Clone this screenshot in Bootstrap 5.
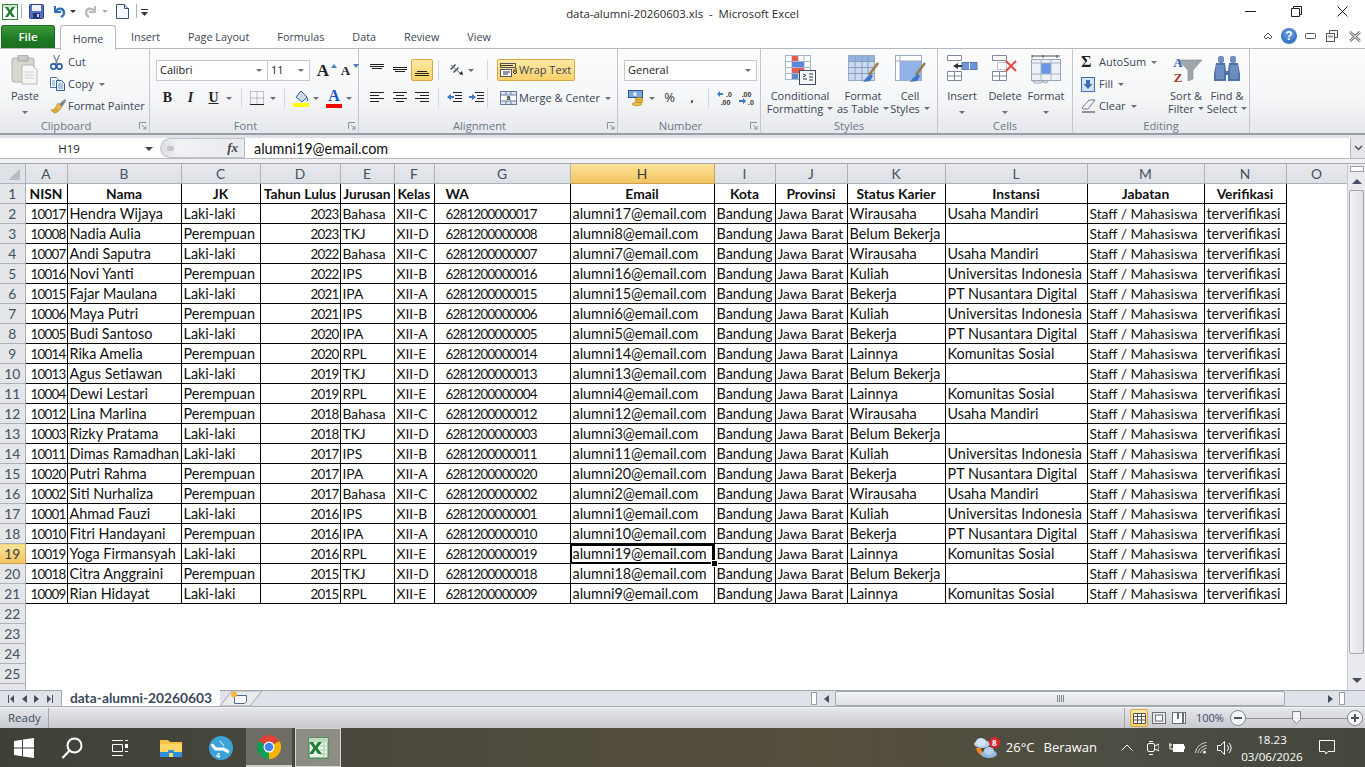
<!DOCTYPE html>
<html lang="en">
<head>
<meta charset="UTF-8">
<title>data-alumni-20260603.xls - Microsoft Excel</title>
<link href="https://cdn.jsdelivr.net/npm/bootstrap@5.3.0/dist/css/bootstrap.min.css" rel="stylesheet">
<style>
html, body { margin: 0; width: 1365px; height: 767px; overflow: hidden; background: #fff; }
body { font-family: "Open Sans", "Liberation Sans", sans-serif; font-size: 11px; color: #3b4656; display: flex; flex-direction: column; }
svg { display: block; flex: none; }
.dd { width: 0; height: 0; border: 3px solid transparent; border-top: 3px solid #6b6f76; border-bottom: 0; flex: none; }
.dd-gap { margin-left: 5px; }
.tl { display: flex; align-items: center; justify-content: center; flex: none; height: 22px; }
.sp { flex: none; }
.w1 { width: 1px; } .w2 { width: 2px; } .w3 { width: 3px; } .w4 { width: 4px; } .w5 { width: 5px; } .w6 { width: 6px; } .w7 { width: 7px; } .w8 { width: 8px; } .w9 { width: 9px; } .w12 { width: 12px; }
.w15 { width: 15px; } .w16 { width: 16px; } .w17 { width: 17px; } .w18 { width: 18px; } .w22 { width: 22px; } .w23 { width: 23px; } .w24 { width: 24px; }
.vsep { width: 1px; height: 20px; background: #d3d6db; flex: none; }

.titlebar { height: 24px; flex: none; background: #fff; position: relative; }
.qat { padding: 4px 0 0 2px; height: 24px; }
.qat-sep { width: 1px; height: 14px; background: #a9adb3; }
.qat-dd { margin-top: 6px; border-top-color: #333; }
.qat-dd-off { margin-top: 6px; border-top-color: #a9adb3; }
.app-title { font-size: 11.4px; color: #2a2a2a; padding-top: 5px; }
.winctl-btn { width: 46px; height: 22px; display: flex; align-items: center; justify-content: center; }
.tabstrip { height: 24px; flex: none; background: #fff; position: relative; padding-left: 1px; }
.tab-file { width: 54px; height: 23px; margin-top: 1px; background: linear-gradient(#3f9a3c, #1f7a25 55%, #1d6e22); color: #fff; border-radius: 3px 3px 0 0; font-weight: 600; font-size: 11.5px; display: flex; align-items: center; justify-content: center; border: 1px solid #1a6a20; border-bottom: 0; }
.tab-home { width: 56px; height: 25px; margin: 1px 0 -1px 5px; background: linear-gradient(#fff, #f8f9fa); border: 1px solid #b7bbc1; border-bottom: 0; border-radius: 3px 3px 0 0; display: flex; align-items: center; justify-content: center; position: relative; z-index: 2; }
.tab-txt { font-size: 10.8px; color: #3b4656; padding-top: 3px; }
.tab-ins { margin-left: 15px; } .tab-next { margin-left: 28px; }

.ribbon { height: 87px; flex: none; display: flex; background: linear-gradient(#fcfcfd, #f6f7f8 55%, #e5e8ec); border-top: 1px solid #b4b8be; border-bottom: 2px solid #9a9ea5; }
.rb-group { flex: none; display: flex; flex-direction: column; border-right: 1px solid #c2c6cd; position: relative; height: 100%; }
.rb-body { height: 69px; flex: none; }
.rb-label { text-align: center; color: #6c7785; font-size: 11.2px; line-height: 16px; }
.rb-lbl-ln { padding-right: 17px; }
.launch { right: 2px; bottom: 3px; }
.g-clip { width: 150px; } .g-font { width: 209px; } .g-align { width: 259px; } .g-num { width: 143px; } .g-style { width: 177px; } .g-cell { width: 135px; } .g-edit { width: 177px; }
.rows { padding: 10px 0 0 6px; display: flex; flex-direction: column; gap: 6px; }
.rows-row { display: flex; align-items: center; height: 22px; }
.combo { height: 21px; background: #fff; border: 1px solid #c6cad0; display: flex; align-items: center; justify-content: space-between; padding: 0 5px 0 3px; font-size: 11px; color: #222; flex: none; }
.cb-name { width: 112px; } .cb-size { width: 43px; margin-left: -1px; } .cb-num { width: 133px; }
.hl-btn { background: linear-gradient(#fde9a5, #fbd169); border: 1px solid #d8a843; border-radius: 2px; }
.wrap-btn { width: 78px; height: 22px; gap: 1px; padding-left: 2px; color: #3b4656; }
.merge-lbl { margin-right: 5px; white-space: nowrap; }
.stack { padding-top: 2px; }
.stack-row { height: 22px; display: flex; align-items: center; white-space: nowrap; color: #3b4656; }
.slot { width: 18px; flex: none; display: flex; justify-content: flex-start; }
.pastebtn { width: 40px; margin: 0 5px 0 5px; color: #9a9da3; }
.bigbtn { flex: none; display: flex; flex-direction: column; align-items: center; padding-top: 6px; line-height: 13px; color: #3b4656; white-space: nowrap; }
.big-ic { height: 30px; margin-bottom: 4px; }
.bw78 { width: 78px; } .bw48 { width: 48px; } .bw46 { width: 46px; } .bw38 { width: 38px; } .bw44 { width: 44px; }
.cap-dd { display: flex; align-items: center; gap: 4px; height: 13px; justify-content: center; }
.a-big { font-family: "Liberation Serif", serif; font-weight: 700; color: #222; line-height: 1; }
.fmt-b { font-size: 14px; } .fmt-i { font-style: italic; font-size: 14px; } .fmt-u { font-size: 14px; text-decoration: underline; }
.grow-a { font-size: 17px; } .shrink-a { font-size: 13px; }
.pct-sign { font-size: 13px; color: #333; }

.fbar { height: 29px; flex: none; background: linear-gradient(#dfe2e8 80%, #f0f1f4 80%); border-bottom: 1px solid #a5a9af; padding-top: 3px; display: flex; position: relative; }
.fbar-inner { height: 21px; display: flex; align-items: center; flex: 1; background: #fff; border-bottom: 1px solid #b6bac0; }
.namebox { width: 155px; display: flex; align-items: center; justify-content: center; position: relative; font-size: 11.5px; color: #222; height: 100%; padding-right: 17px; padding-top: 1px; }
.namebox .dd { position: absolute; right: 2px; top: 9px; border-top-color: #444; border-width: 4px 4px 0; }
.fx-round { width: 84px; height: 100%; margin-left: 5px; background: linear-gradient(90deg, #d9dce1, #f1f2f4 20%, #e8eaee); border-radius: 10px 0 0 10px; border: 1px solid #c0c4ca; border-right: 0; display: flex; align-items: center; justify-content: space-between; padding: 0 6px; font-family: "Liberation Serif", serif; font-style: italic; font-weight: 700; font-size: 13px; color: #444; }
.fx-input { flex: 1; padding-left: 9px; padding-top: 2px; border-left: 1px solid #b6bac0; height: 100%; display: flex; align-items: center; font-family: Lato, sans-serif; font-size: 14.4px; color: #111; background: #fff; }
.fx-exp { width: 15px; background: #e4e6ea; border-left: 1px solid #b6bac0; height: 100%; display: flex; align-items: center; justify-content: center; }

.sheet { height: 526px; flex: none; display: flex; overflow: hidden; }
.gridwrap { width: 1347px; overflow: hidden; flex: none; }
.xl { border-collapse: collapse; table-layout: fixed; width: 1347px; font-family: Lato, "Liberation Sans", sans-serif; font-size: 14.4px; color: #111; }
.xl td { height: 20px; padding: 0 2px; white-space: nowrap; overflow: hidden; line-height: 18px; }
.xl .data { border: 1px solid #000; padding-top: 1px; }
.xl .num { text-align: right; font-size: 13.4px; letter-spacing: -.75px; padding-right: 1px; }
.xl .tg { font-size: 13.8px; }
.xl .hd { text-align: center; font-weight: 700; font-size: 13.8px; }
.xl .wa { padding-left: 11px; font-size: 13.4px; letter-spacing: -.75px; }
.xl .hd.wa { font-size: 13.8px; letter-spacing: 0; text-align: left; }
.xl .colh, .xl .rowh { background: #e4e6ea; color: #44505f; text-align: center; border: 1px solid #aeb2b8; font-size: 13.8px; }
.xl .colh { border-top: 0; height: 19px; background: linear-gradient(#e7e9ed, #dcdfe4); }
.xl .rowh { border-left: 0; }
.xl .corner { height: 19px; background: #dfe2e7; border: 1px solid #aeb2b8; border-width: 0 1px 1px 0; padding: 0; }
.xl .act { background: linear-gradient(#fbe39a, #f3c35e); color: #3b3b3b; border-color: #c9a24d; }
.xl .sel { position: relative; overflow: visible; outline: 2px solid #000; outline-offset: -2px; }
.fillh { position: absolute; right: -4px; bottom: -4px; width: 7px; height: 7px; background: #000; border: 1px solid #fff; z-index: 3; }
.vscroll { width: 18px; flex: none; background: #e9ebef; border-left: 1px solid #c8cbd0; display: flex; flex-direction: column; align-items: center; }
.vs-split { width: 14px; height: 6px; margin-top: 2px; background: #fff; border: 1px solid #9a9ea5; flex: none; }
.vs-btn { height: 16px; width: 100%; display: flex; align-items: center; justify-content: center; flex: none; }
.vs-up { margin-top: 1px; } .vs-thumb { height: 464px; width: 15px; flex: none; background: linear-gradient(90deg, #f2f3f5, #dfe2e6); border: 1px solid #a2a6ad; border-radius: 2px; margin-top: 1px; }
.vs-gap { flex: 1; } .vs-down { height: 20px; }
.arr-up { width: 0; height: 0; border: 5px solid transparent; border-bottom: 5px solid #44505f; border-top: 0; }
.arr-dn { width: 0; height: 0; border: 5px solid transparent; border-top: 5px solid #44505f; border-bottom: 0; }
.arr-l { width: 0; height: 0; border: 4px solid transparent; border-right: 5px solid #44505f; border-left: 0; }
.arr-r { width: 0; height: 0; border: 4px solid transparent; border-left: 5px solid #44505f; border-right: 0; }

.tabsbar { height: 17px; flex: none; background: #dfe2e8; border-top: 1px solid #a5a9af; border-bottom: 1px solid #a5a9af; display: flex; align-items: stretch; }
.sh-nav { width: 62px; display: flex; align-items: center; justify-content: space-around; padding: 0 4px; border-right: 1px solid #a5a9af; flex: none; }
.sh-tab { width: 158px; flex: none; background: #fff; margin-top: -1px; text-align: center; font-family: Lato, sans-serif; font-weight: 700; font-size: 13.8px; color: #3d4a5c; line-height: 16px; }
.sh-new { width: 42px; flex: none; margin-top: -1px; }
.hs-space { width: 549px; flex: none; }
.hs-split { width: 6px; height: 13px; margin-top: 1px; background: #fff; border: 1px solid #9a9ea5; flex: none; }
.hs-btn { width: 18px; flex: none; display: flex; align-items: center; justify-content: center; }
.hs-thumb { width: 450px; flex: none; background: linear-gradient(#f3f4f6, #dde0e5); border: 1px solid #a2a6ad; border-radius: 2px; display: flex; align-items: center; justify-content: center; }
.hs-grip { width: 7px; height: 7px; background: repeating-linear-gradient(90deg, #7f848b 0 1px, transparent 1px 2px); }
.hs-rest { width: 54px; flex: none; display: flex; align-items: center; justify-content: flex-end; padding-right: 6px; }

.statusbar { height: 21px; flex: none; background: linear-gradient(#e4e6ea, #c7cacf); border-top: 1px solid #f4f5f6; display: flex; align-items: center; color: #3f4a58; padding-right: 2px; }
.st-ready { width: 49px; padding-left: 8px; border-right: 1px solid #a2a6ac; height: 100%; display: flex; align-items: center; font-size: 11.5px; }
.st-right { display: flex; align-items: center; height: 100%; }
.st-sep { width: 1px; height: 100%; background: #a2a6ac; margin-right: 5px; }
.vw-btn { width: 18px; height: 18px; display: flex; align-items: center; justify-content: center; margin-right: 2px; }
.zm-pct { width: 34px; margin-left: 6px; color: #4a3f6a; font-size: 11px; }
.zm-slide { width: 101px; height: 16px; position: relative; display: flex; align-items: center; }
.zm-line { width: 100%; height: 1px; background: #8f9399; }
.zm-thumb { position: absolute; left: 46px; top: 1px; }

.taskbar { height: 39px; flex: none; display: flex; align-items: center; background: linear-gradient(90deg, #3f4139, #4d4a3d 35%, #564f3c 60%, #4b4c43 85%, #45473f); color: #fff; }
.tb-ic { height: 39px; display: flex; align-items: center; justify-content: center; flex: none; }
.tb-start { width: 48px; } .tb-search { width: 48px; } .tb-tv { width: 48px; } .tb-app { width: 50px; }
.tb-folder { margin-left: 2px; }
.tb-chrome { width: 46px; background: rgba(255,255,255,.22); border-bottom: 2px solid #cfd0ca; }
.tb-excel { width: 46px; margin-left: 3px; background: rgba(255,255,255,.38); border: 1px solid #d6d6d0; }
.tray { margin-left: auto; display: flex; align-items: center; height: 39px; font-size: 13px; padding-right: 22px; }
.tb-badge { top: 1px; right: -2px; width: 11px; height: 11px; border-radius: 50%; background: #d8272d; font-size: 8px; line-height: 11px; text-align: center; color: #fff; font-weight: 700; }
.wx-temp { margin-left: 8px; } .wx-txt { margin-left: 9px; margin-right: 24px; }
.tr-ic { margin-right: 10px; }
.clock { width: 78px; text-align: center; line-height: 17px; font-size: 11.6px; }
.notif { width: 32px; display: flex; justify-content: center; }
</style>
</head>
<body>

<div class="titlebar d-flex justify-content-between">
  <div class="qat d-flex">
    <svg width="16" height="16" viewBox="0 0 16 16"><rect x=".5" y=".5" width="15" height="15" fill="#fff" stroke="#2d8a3c"/><rect x="1" y="1" width="14" height="3" fill="#cfe6d2"/><path d="M3 3h3l2 3 2-3h3l-3.500 5 3.500 5h-3l-2-3-2 3H3l3.500-5z" fill="#1e7b34"/></svg>
    <div class="sp w3"></div>
    <div class="qat-sep"></div>
    <div class="sp w7"></div>
    <svg width="15" height="15" viewBox="0 0 15 15"><rect x=".5" y=".5" width="14" height="14" rx="1" fill="#5570c4" stroke="#2d3f86"/><rect x="3" y="1" width="9" height="6" fill="#eef2fb"/><rect x="4" y="9" width="7" height="5" fill="#28356f"/><rect x="8" y="10" width="2" height="3" fill="#c8d2ee"/></svg>
    <div class="sp w8"></div>
    <svg width="15" height="15" viewBox="0 0 15 15"><path d="M3 2v6h6" fill="none" stroke="#2f6fb8" stroke-width="2"/><path d="M3 8c3-5 9-4 9 1 0 2-1 3-3 4" fill="none" stroke="#2f6fb8" stroke-width="2.300"/></svg>
    <div class="sp w3"></div>
    <div class="dd qat-dd"></div>
    <div class="sp w7"></div>
    <svg width="15" height="15" viewBox="0 0 15 15"><path d="M12 2v6H6" fill="none" stroke="#b7babf" stroke-width="2"/><path d="M12 8C9 3 3 4 3 9c0 2 1 3 3 4" fill="none" stroke="#b7babf" stroke-width="2.300"/></svg>
    <div class="sp w4"></div>
    <div class="dd qat-dd-off"></div>
    <div class="sp w8"></div>
    <svg width="13" height="15" viewBox="0 0 13 15"><path d="M.5.5h8l4 4v10H.5z" fill="#f7f9fc" stroke="#34507e"/><path d="M8.500.5v4h4" fill="#cdd9ea" stroke="#34507e"/></svg>
    <div class="sp w7"></div>
    <div class="qat-sep"></div>
    <div class="sp w4"></div>
    <svg width="7" height="15" viewBox="0 0 7 15"><rect y="5" width="7" height="1" fill="#333"/><path d="M0 8h7l-3.500 4z" fill="#333"/></svg>
  </div>
  <div class="app-title position-absolute top-0 start-0 w-100 text-center">data-alumni-20260603.xls&nbsp; -&nbsp; Microsoft Excel</div>
  <div class="d-flex">
    <div class="winctl-btn"><svg width="11" height="1" viewBox="0 0 11 1"><rect width="11" height="1" fill="#222"/></svg></div>
    <div class="winctl-btn"><svg width="11" height="11" viewBox="0 0 11 11"><path d="M2.500 2.500V.5h8v8h-2M.5 2.500h8v8h-8z" fill="none" stroke="#222"/></svg></div>
    <div class="winctl-btn"><svg width="11" height="11" viewBox="0 0 11 11"><path d="M.5.5l10 10M10.500.5l-10 10" fill="none" stroke="#222"/></svg></div>
  </div>
</div>

<div class="tabstrip d-flex align-items-start">
  <div class="tab-file">File</div>
  <div class="tab-home"><span class="tab-txt">Home</span></div>
  <div class="align-self-center tab-txt tab-ins">Insert</div>
  <div class="align-self-center tab-txt tab-next">Page Layout</div>
  <div class="align-self-center tab-txt tab-next">Formulas</div>
  <div class="align-self-center tab-txt tab-next">Data</div>
  <div class="align-self-center tab-txt tab-next">Review</div>
  <div class="align-self-center tab-txt tab-next">View</div>
  <div class="ms-auto d-flex align-items-center align-self-center pe-1">
    <svg width="10" height="8" viewBox="0 0 10 8" class="me-2"><path d="M1 5l4-4 4 4-2 2-2-2-2 2z" fill="#fff" stroke="#555"/></svg>
    <svg width="16" height="16" viewBox="0 0 16 16" class="me-2"><circle cx="8" cy="8" r="8" fill="#3c79c8"/><circle cx="8" cy="6" r="6" fill="#6da1e0" opacity=".5"/><text x="8" y="12" font-size="12" font-weight="700" text-anchor="middle" fill="#fff" font-family="Liberation Sans">?</text></svg>
    <svg width="11" height="6" viewBox="0 0 11 6" class="me-2"><rect x=".5" y=".5" width="10" height="5" rx="1" fill="#fff" stroke="#555"/></svg>
    <div class="sp w2"></div>
    <svg width="12" height="12" viewBox="0 0 12 12" class="me-2"><path d="M3.500 3.500v-3h8v7h-3" fill="#fff" stroke="#555"/><rect x=".5" y="3.500" width="8" height="8" fill="#fff" stroke="#555"/><rect x="2" y="5.500" width="5" height="2" fill="#999"/></svg>
    <div class="sp w3"></div>
    <svg width="12" height="11" viewBox="0 0 12 11"><path d="M1 1l10 9M11 1L1 10" stroke="#666" stroke-width="2.500"/><path d="M1 1l10 9M11 1L1 10" stroke="#fff" stroke-width="1"/></svg>
  </div>
</div>

<div class="ribbon">
  <div class="rb-group g-clip">
    <div class="rb-body d-flex">
      <div class="bigbtn pastebtn">
        <svg class="big-ic" width="28" height="30" viewBox="0 0 28 30"><rect x="1" y="3" width="22" height="24" rx="2" fill="#d9d5cf" stroke="#b4b0aa"/><rect x="7" y="0" width="10" height="6" rx="1" fill="#c9c9c9" stroke="#a5a5a5"/><path d="M11 10h10l5 5v14H11z" fill="#f5f5f5" stroke="#b9b9b9"/><path d="M14 17h9M14 20h9M14 23h9" stroke="#cfcfcf"/></svg>
        <span class="text-center">Paste</span>
        <div class="cap-dd mt-1"><div class="dd"></div></div>
      </div>
      <div class="stack">
        <div class="stack-row"><div class="slot"><svg width="13" height="15" viewBox="0 0 13 15"><path d="M3.500 0l4 9M9.500 0l-4 9" stroke="#7c8792" stroke-width="1.300"/><circle cx="3.500" cy="11.500" r="2.600" fill="none" stroke="#2a5caa" stroke-width="1.600"/><circle cx="9.500" cy="11.500" r="2.600" fill="none" stroke="#2a5caa" stroke-width="1.600"/></svg></div>Cut</div>
        <div class="stack-row"><div class="slot"><svg width="15" height="14" viewBox="0 0 15 14"><path d="M.5.500h6l2 2v8h-8z" fill="#fff" stroke="#4c6fa5"/><path d="M6.500 3.500h5l3 3v7h-8z" fill="#eaf1fb" stroke="#2a5caa"/><path d="M8 7h5M8 9h5M8 11h5M2 4h3M2 6h3M2 8h3" stroke="#6f90c0"/></svg></div>Copy<div class="dd dd-gap"></div></div>
        <div class="stack-row"><div class="slot"><svg width="16" height="15" viewBox="0 0 16 15"><path d="M9 5l3 3 4-6-1-2z" fill="#7a8794"/><path d="M1 11c4 0 5-4 7-7l4 4c-2 3-5 6-8 6z" fill="#e5c04c" stroke="#a67f22" stroke-width=".7"/><path d="M3 13l4-4M5 13.500l4-4" stroke="#a67f22" stroke-width=".7"/></svg></div>Format Painter</div>
      </div>
    </div>
    <div class="rb-label rb-lbl-ln">Clipboard</div>
    <svg class="launch position-absolute" width="8" height="8" viewBox="0 0 8 8"><path d="M.5 7V.5H7M3 3l4 4M4 7h3V4" fill="none" stroke="#8b9099"/></svg>
  </div>

  <div class="rb-group g-font">
    <div class="rb-body rows">
      <div class="rows-row">
        <div class="combo cb-name">Calibri<div class="dd"></div></div>
        <div class="combo cb-size">11<div class="dd"></div></div>
        <div class="tl w5"></div>
        <div class="tl w16 a-big grow-a">A</div><svg width="6" height="4" viewBox="0 0 6 4" class="mb-2"><path d="M0 4l3-4 3 4z" fill="#4a7fc0"/></svg>
        <div class="tl w1"></div>
        <div class="tl w15 a-big shrink-a">A</div><svg width="6" height="4" viewBox="0 0 6 4" class="mb-2"><path d="M0 0l3 4 3-4z" fill="#4a7fc0"/></svg>
      </div>
      <div class="rows-row">
        <div class="tl w23 a-big fmt-b">B</div>
        <div class="tl w23 a-big fmt-i">I</div>
        <div class="tl w23 a-big fmt-u">U</div>
        <div class="tl w8"><div class="dd"></div></div>
        <div class="tl w8"></div><div class="vsep"></div><div class="tl w6"></div>
        <div class="tl w18"><svg width="14" height="14" viewBox="0 0 14 14"><path d="M.5.5h13v13M.5.500v13M7 .5v13M.5 7h13" fill="none" stroke="#8b8f95" stroke-dasharray="1 1"/><rect y="13" width="14" height="1" fill="#222"/></svg></div>
        <div class="tl w3"></div><div class="tl w8"><div class="dd"></div></div>
        <div class="tl w7"></div><div class="vsep"></div><div class="tl w7"></div>
        <div class="tl w18"><svg width="16" height="17" viewBox="0 0 16 17"><path d="M3 7l5-6 6 6-5 5z" fill="#cdd9e8" stroke="#39618f"/><path d="M14 7c1.500 2 1.500 4 .5 4-1.200 0-1-2-.5-4z" fill="#2b6cb0"/><rect y="13" width="16" height="4" fill="#ffff00"/></svg></div>
        <div class="tl w2"></div><div class="tl w8"><div class="dd"></div></div>
        <div class="tl w5"></div>
        <div class="tl w18 flex-column"><span class="a-big fs-6 lh-1 text-primary-emphasis">A</span><svg width="16" height="4" viewBox="0 0 16 4"><rect width="16" height="4" fill="#f00"/></svg></div>
        <div class="tl w2"></div><div class="tl w8"><div class="dd"></div></div>
      </div>
    </div>
    <div class="rb-label rb-lbl-ln">Font</div>
    <svg class="launch position-absolute" width="8" height="8" viewBox="0 0 8 8"><path d="M.5 7V.5H7M3 3l4 4M4 7h3V4" fill="none" stroke="#8b9099"/></svg>
  </div>

  <div class="rb-group g-align">
    <div class="rb-body rows">
      <div class="rows-row">
        <div class="tl w1"></div>
        <div class="tl w22"><svg width="14" height="14" viewBox="0 0 14 14"><path d="M0 1.500h14M0 3.500h14M2 5.500h10" stroke="#222"/></svg></div>
        <div class="tl w23"><svg width="14" height="14" viewBox="0 0 14 14"><path d="M0 4.500h14M0 6.500h14M2 8.500h10" stroke="#222"/></svg></div>
        <div class="tl w22 hl-btn"><svg width="14" height="14" viewBox="0 0 14 14"><path d="M2 8.500h10M0 10.500h14M0 12.500h14" stroke="#222"/></svg></div>
        <div class="tl w5"></div><div class="vsep"></div><div class="tl w9"></div>
        <div class="tl w18"><svg width="16" height="14" viewBox="0 0 16 14"><path d="M1 6l5-5 1 1-5 5zM4 9l5-5 1 1-5 5z" fill="#444"/><path d="M2 2l10 9" stroke="#4a6a94"/><path d="M10 11l4 1-1-4z" fill="#222"/></svg></div>
        <div class="tl w1"></div><div class="tl w8"><div class="dd"></div></div>
        <div class="tl w12"></div><div class="vsep"></div><div class="tl w9"></div>
        <div class="tl wrap-btn hl-btn justify-content-start"><svg width="18" height="15" viewBox="0 0 18 15"><path d="M1 2.500h12M1 12.500h6" stroke="#333"/><rect x=".5" y=".5" width="15" height="4" fill="none" stroke="#555"/><rect x=".5" y="6.500" width="11" height="7" fill="#f7f8fa" stroke="#555"/><path d="M3 9h7M3 11h5" stroke="#333"/><path d="M14 6v3h-1l2 2 2-2h-1V5" fill="none" stroke="#222"/></svg><span>Wrap Text</span></div>
      </div>
      <div class="rows-row">
        <div class="tl w1"></div>
        <div class="tl w22"><svg width="14" height="12" viewBox="0 0 14 12"><path d="M0 .5h14M0 3.500h9M0 6.500h14M0 9.500h9" stroke="#222"/></svg></div>
        <div class="tl w23"><svg width="14" height="12" viewBox="0 0 14 12"><path d="M0 .5h14M3 3.500h8M0 6.500h14M3 9.500h8" stroke="#222"/></svg></div>
        <div class="tl w22"><svg width="14" height="12" viewBox="0 0 14 12"><path d="M0 .5h14M5 3.500h9M0 6.500h14M5 9.500h9" stroke="#222"/></svg></div>
        <div class="tl w5"></div><div class="vsep"></div><div class="tl w7"></div>
        <div class="tl w17"><svg width="15" height="12" viewBox="0 0 15 12"><path d="M6 .5h9M8 3.500h7M8 6.500h7M6 9.500h9" stroke="#222"/><path d="M0 5l4-3v2h3v2H4v2z" fill="#3a78c4"/></svg></div>
        <div class="tl w5"></div>
        <div class="tl w17"><svg width="15" height="12" viewBox="0 0 15 12"><path d="M6 .5h9M8 3.500h7M8 6.500h7M6 9.500h9" stroke="#222"/><path d="M7 5L3 2v2H0v2h3v2z" fill="#3a78c4"/></svg></div>
        <div class="tl w2"></div><div class="vsep"></div><div class="tl w9"></div>
        <div class="tl w22"><svg width="17" height="14" viewBox="0 0 17 14"><rect x=".5" y=".5" width="16" height="13" fill="#dce6f5" stroke="#66799a"/><rect x="1" y="4" width="15" height="6" fill="#fff"/><path d="M.5 4h16M.5 10h16M6 .5v3M11 .5v3M6 10v3M11 10v3" stroke="#66799a"/><text x="8.500" y="9" font-size="6.500" text-anchor="middle" fill="#222" font-family="Liberation Sans" font-weight="700">a</text></svg></div>
        <span class="merge-lbl">Merge &amp; Center</span><div class="dd"></div>
      </div>
    </div>
    <div class="rb-label rb-lbl-ln">Alignment</div>
    <svg class="launch position-absolute" width="8" height="8" viewBox="0 0 8 8"><path d="M.5 7V.5H7M3 3l4 4M4 7h3V4" fill="none" stroke="#8b9099"/></svg>
  </div>

  <div class="rb-group g-num">
    <div class="rb-body rows">
      <div class="rows-row"><div class="combo cb-num">General<div class="dd"></div></div></div>
      <div class="rows-row">
        <div class="tl w24"><svg width="17" height="16" viewBox="0 0 17 16"><rect x=".5" y=".5" width="14" height="7" fill="#7ea6dc" stroke="#2f5a96"/><circle cx="7" cy="4" r="2" fill="#dbe8f8"/><ellipse cx="11" cy="9" rx="4" ry="1.600" fill="#f0c040" stroke="#a47c1e" stroke-width=".6"/><ellipse cx="11" cy="11.500" rx="4" ry="1.600" fill="#f0c040" stroke="#a47c1e" stroke-width=".6"/><ellipse cx="9" cy="14" rx="5" ry="1.600" fill="#f0c040" stroke="#a47c1e" stroke-width=".6"/></svg></div>
        <div class="tl w8"><div class="dd"></div></div>
        <div class="tl w6"></div>
        <div class="tl w15 pct-sign">%</div>
        <div class="tl w7"></div>
        <div class="tl w16 fw-bold text-dark">,</div>
        <div class="tl w8"></div><div class="vsep"></div><div class="tl w7"></div>
        <div class="tl w18"><svg width="17" height="14" viewBox="0 0 17 14"><path d="M0 3l3-3v2h3v2H3v2z" fill="#3a78c4"/><text x="12" y="6" font-size="7" text-anchor="middle" font-family="Liberation Sans" font-weight="700" fill="#333">.0</text><text x="8.500" y="13.500" font-size="7" text-anchor="middle" font-family="Liberation Sans" font-weight="700" fill="#333">.00</text></svg></div>
        <div class="tl w3"></div>
        <div class="tl w18"><svg width="17" height="14" viewBox="0 0 17 14"><text x="8.500" y="6" font-size="7" text-anchor="middle" font-family="Liberation Sans" font-weight="700" fill="#333">.00</text><path d="M8 10L5 7v2H1v2h4v2z" fill="#3a78c4"/><text x="13" y="13.500" font-size="7" text-anchor="middle" font-family="Liberation Sans" font-weight="700" fill="#333">.0</text></svg></div>
      </div>
    </div>
    <div class="rb-label rb-lbl-ln">Number</div>
    <svg class="launch position-absolute" width="8" height="8" viewBox="0 0 8 8"><path d="M.5 7V.5H7M3 3l4 4M4 7h3V4" fill="none" stroke="#8b9099"/></svg>
  </div>

  <div class="rb-group g-style">
    <div class="rb-body d-flex">
      <div class="bigbtn bw78">
        <svg class="big-ic" width="31" height="30" viewBox="0 0 31 30"><rect x=".5" y=".5" width="25" height="24" fill="#fff" stroke="#a7b5c9"/><path d="M7 .5v24M13 .5v24M19 .5v24M.5 6.500h25M.5 12.500h25M.5 18.500h25" stroke="#a7b5c9"/><rect x="7" y="1" width="6" height="5" fill="#e85a4f"/><rect x="7" y="7" width="12" height="5" fill="#5b89d6"/><rect x="7" y="13" width="12" height="5" fill="#e85a4f"/><rect x="7" y="19" width="6" height="5" fill="#5b89d6"/><rect x="14.500" y="15.500" width="16" height="14" fill="#f5f7fb" stroke="#3d4a5e"/><path d="M18 19l3 1.500-3 1.500M18 24h4M24 19h4M24 22h4M24 25h4" fill="none" stroke="#333"/></svg>
        Conditional<div class="cap-dd">Formatting<div class="dd"></div></div>
      </div>
      <div class="bigbtn bw48">
        <svg class="big-ic" width="31" height="30" viewBox="0 0 31 30"><rect x=".5" y=".5" width="26" height="25" fill="#c9daf2" stroke="#9aabc3"/><rect x="1" y="1" width="25" height="5" fill="#93b3e2"/><path d="M7 .5v25M14 .5v25M20 .5v25M.5 6.500h26M.5 12.500h26M.5 18.500h26" stroke="#8b9cb5"/><path d="M30 8l-9 12" stroke="#9b7a4a" stroke-width="2.500"/><path d="M23 19l-5 4-3 4 7-1 3-5z" fill="#3f74c2"/></svg>
        Format<div class="cap-dd">as Table<div class="dd"></div></div>
      </div>
      <div class="bigbtn bw46">
        <svg class="big-ic" width="31" height="30" viewBox="0 0 31 30"><rect x=".5" y=".5" width="26" height="25" fill="#fff" stroke="#9aabc3"/><rect x="5" y="6" width="21" height="19" fill="#93b3e8"/><path d="M5 .5v25M.5 6h26" stroke="#9aabc3"/><path d="M30 8l-9 12" stroke="#9b7a4a" stroke-width="2.500"/><path d="M23 19l-5 4-3 4 7-1 3-5z" fill="#3f74c2"/></svg>
        Cell<div class="cap-dd">Styles<div class="dd"></div></div>
      </div>
    </div>
    <div class="rb-label">Styles</div>
  </div>

  <div class="rb-group g-cell">
    <div class="rb-body d-flex">
      <div class="bigbtn bw48">
        <svg class="big-ic" width="31" height="30" viewBox="0 0 31 30"><path d="M.5.500h14v5h-14zM.5 16.500h14v9H.5zM7.500 16.500v9M.5 21h14" fill="#fff" stroke="#7f8b9c"/><rect x="15" y="7.500" width="15" height="7" fill="#6d96d8" stroke="#5a7bb0"/><path d="M22.500 7.500v7" stroke="#fff"/><path d="M6 11l5-3v2h4v2h-4v2z" fill="#333"/></svg>
        Insert<div class="cap-dd mt-1"><div class="dd"></div></div>
      </div>
      <div class="bigbtn bw38">
        <svg class="big-ic" width="26" height="30" viewBox="0 0 26 30"><path d="M.5.500h14v5h-14zM.5 16.500h14v9H.5zM7.500 16.500v9M.5 21h14" fill="#fff" stroke="#7f8b9c"/><rect x="5.500" y="7.500" width="9" height="7" fill="#fff" stroke="#7f8b9c" stroke-dasharray="1 1"/><path d="M14 6l10 10M24 6L14 16" stroke="#e8483c" stroke-width="2"/></svg>
        Delete<div class="cap-dd mt-1"><div class="dd"></div></div>
      </div>
      <div class="bigbtn bw44">
        <svg class="big-ic" width="31" height="30" viewBox="0 0 31 30"><path d="M1 1h28M1 0v3M12 0v3M26 0v3" stroke="#4a4f57"/><rect x=".5" y="4.500" width="29" height="21" fill="#eef2f8" stroke="#9aa6b6"/><rect x="10" y="8" width="10" height="11" fill="#6d96e2"/><path d="M10 4.500v21M20 4.500v21M.5 8h29M.5 19h29" stroke="#a7b2c2"/><path d="M2 26h10a2 2 0 0 1-2 2H4a2 2 0 0 1-2-2zM12 26h5a2 2 0 0 1-2 2h-1z" fill="#fff" stroke="#9aa6b6"/></svg>
        Format<div class="cap-dd mt-1"><div class="dd"></div></div>
      </div>
    </div>
    <div class="rb-label">Cells</div>
  </div>

  <div class="rb-group g-edit">
    <div class="rb-body d-flex">
      <div class="stack ms-2 bw78 me-2">
        <div class="stack-row"><div class="slot"><span class="a-big fs-6 lh-1 text-dark">Σ</span></div>AutoSum<div class="dd dd-gap"></div></div>
        <div class="stack-row"><div class="slot"><svg width="14" height="15" viewBox="0 0 14 15"><rect x=".5" y=".5" width="13" height="14" fill="#d6e3f6" stroke="#3f6cb3"/><path d="M5 3h4v4h2.500L7 12 2.500 7H5z" fill="#3f6cb3"/></svg></div>Fill<div class="dd dd-gap"></div></div>
        <div class="stack-row"><div class="slot"><svg width="15" height="14" viewBox="0 0 15 14"><path d="M1 9l7-8h6L7 10H2z" fill="#f1f3f6" stroke="#737a85"/><path d="M1 13h13" stroke="#333"/></svg></div>Clear<div class="dd dd-gap"></div></div>
      </div>
      <div class="bigbtn bw38">
        <svg class="big-ic" width="31" height="30" viewBox="0 0 31 30"><path d="M7 5h24l-9 10v9l-5 2V15z" fill="#a1a6ad" stroke="#7f858e" stroke-width=".6"/><text x="7" y="12" font-family="Liberation Serif" font-weight="700" font-size="13" text-anchor="middle" fill="#2f5fa8">A</text><text x="7" y="27" font-family="Liberation Serif" font-weight="700" font-size="13" text-anchor="middle" fill="#a33a2f">Z</text></svg>
        Sort &amp;<div class="cap-dd">Filter<div class="dd"></div></div>
      </div>
      <div class="bigbtn bw44">
        <svg class="big-ic" width="28" height="30" viewBox="0 0 28 30"><rect x="5" y="1" width="6" height="7" rx="2" fill="#6f8fbd"/><rect x="17" y="1" width="6" height="7" rx="2" fill="#6f8fbd"/><path d="M3 8h9l1 8h2l1-8h9l2 11v7H15v-6h-2v6H1v-7z" fill="#4f72a8"/><path d="M3 10h8v14H3zM17 10h8v14h-8z" fill="#7fa0cf" opacity=".6"/></svg>
        Find &amp;<div class="cap-dd">Select<div class="dd"></div></div>
      </div>
    </div>
    <div class="rb-label">Editing</div>
  </div>
</div>

<div class="fbar">
  <div class="fbar-inner">
    <div class="namebox">H19<div class="dd"></div></div>
    <div class="fx-round"><svg width="7" height="5" viewBox="0 0 7 5"><rect width="7" height="5" rx="2" fill="#c3c6cb"/></svg><i>fx</i></div>
    <div class="fx-input">alumni19@email.com</div>
    <div class="fx-exp"><svg width="9" height="6" viewBox="0 0 9 6"><path d="M1 1l3.500 3.500L8 1" fill="none" stroke="#555" stroke-width="1.500"/></svg></div>
  </div>
</div>

<div class="sheet">
  <div class="gridwrap"><table class="xl" id="grid"></table></div>
  <div class="vscroll">
    <div class="vs-split"></div>
    <div class="vs-btn vs-up"><div class="arr-up"></div></div>
    <div class="vs-thumb"></div>
    <div class="vs-gap"></div>
    <div class="vs-btn vs-down"><div class="arr-dn"></div></div>
  </div>
</div>

<div class="tabsbar">
  <div class="sh-nav">
    <svg width="6" height="8" viewBox="0 0 6 8"><path d="M0 0h1v8H0zM6 0v8L2 4z" fill="#44505f"/></svg>
    <div class="arr-l"></div><div class="arr-r"></div>
    <svg width="6" height="8" viewBox="0 0 6 8"><path d="M6 0H5v8h1zM0 0v8l4-4z" fill="#44505f"/></svg>
  </div>
  <div class="sh-tab">data-alumni-20260603</div>
  <div class="sh-new"><svg width="42" height="16" viewBox="0 0 42 16"><path d="M0 16L12 1h30L30 16z" fill="#e9ebef" stroke="#a5a9af"/><path d="M14.500 5.500h12v6l-2 2h-10z" fill="#fff" stroke="#4a6a94"/><circle cx="14" cy="4.500" r="3" fill="#f6b73c"/></svg></div>
  <div class="hs-space"></div>
  <div class="hs-split"></div>
  <div class="hs-btn"><div class="arr-l"></div></div>
  <div class="hs-thumb"><div class="hs-grip"></div></div>
  <div class="hs-rest"><div class="arr-r"></div></div>
  <div class="hs-split"></div>
</div>

<div class="statusbar justify-content-between">
  <div class="st-ready">Ready</div>
  <div class="st-right">
    <div class="st-sep"></div>
    <div class="vw-btn hl-btn"><svg width="13" height="11" viewBox="0 0 13 11"><path d="M.5.500h12v10H.5zM4.500.5v10M8.500.5v10M.5 3.500h12M.5 7h12" fill="#fff" stroke="#555"/></svg></div>
    <div class="vw-btn"><svg width="14" height="12" viewBox="0 0 14 12"><rect x=".5" y=".5" width="13" height="11" fill="#e8eaed" stroke="#6a6f76"/><rect x="3.500" y="3" width="7" height="6" fill="#fff" stroke="#6a6f76"/></svg></div>
    <div class="vw-btn"><svg width="14" height="12" viewBox="0 0 14 12"><rect x=".5" y=".5" width="13" height="11" fill="#fff" stroke="#6a6f76"/><path d="M5 0h2v7H5zM10 0h2v11h-2z" fill="#6a6f76"/></svg></div>
    <div class="zm-pct">100%</div>
    <svg width="16" height="16" viewBox="0 0 16 16"><circle cx="8" cy="8" r="7.500" fill="#f5f6f7" stroke="#7f848b"/><rect x="4" y="7" width="8" height="2" fill="#4f5560"/></svg>
    <div class="zm-slide"><div class="zm-line"></div><svg class="zm-thumb" width="9" height="13" viewBox="0 0 9 13"><path d="M.5.500h8v8l-4 4-4-4z" fill="#f2f3f5" stroke="#7f848b"/></svg></div>
    <svg width="16" height="16" viewBox="0 0 16 16"><circle cx="8" cy="8" r="7.500" fill="#f5f6f7" stroke="#7f848b"/><path d="M4 7h3V4h2v3h3v2H9v3H7V9H4z" fill="#4f5560"/></svg>
  </div>
</div>

<div class="taskbar">
  <div class="tb-ic tb-start"><svg width="20" height="20" viewBox="0 0 20 20"><path d="M0 3l8-1.200V9.500H0zM9 1.600L20 0v9.500H9zM0 10.500h8v7.700L0 17zM9 10.500h11V20L9 18.400z" fill="#fff"/></svg></div>
  <div class="tb-ic tb-search"><svg width="22" height="22" viewBox="0 0 22 22"><circle cx="13.500" cy="8.500" r="7" fill="none" stroke="#fff" stroke-width="2"/><path d="M8.500 13.500L1.500 21" stroke="#fff" stroke-width="2.200"/></svg></div>
  <div class="tb-ic tb-tv"><svg width="16" height="16" viewBox="0 0 16 16"><path d="M0 .5h11M0 15.500h11M.5 4.500h10v7H.5z" fill="none" stroke="#fff"/><rect x="13" y="0" width="3" height="1" fill="#fff"/><rect x="13" y="4" width="3" height="4" fill="#fff"/><rect x="13" y="11" width="3" height="1" fill="#fff"/></svg></div>
  <div class="tb-ic tb-app tb-folder"><svg width="22" height="19" viewBox="0 0 22 19"><path d="M0 2h8l2 2h12v15H0z" fill="#f5c242"/><rect y="6" width="22" height="13" fill="#ffd768"/><path d="M0 14h8v-2h6v2h8v5H0z" fill="#2f8fd8"/><rect x="9" y="15" width="4" height="4" fill="#ffd768"/></svg></div>
  <div class="tb-ic tb-app"><svg width="24" height="24" viewBox="0 0 24 24"><circle cx="12" cy="12" r="12" fill="#3ea4d8"/><path d="M4 8l3 4h8l5 3-1 2-5-3H6L2 9zM11 5l4 5" fill="#fff" stroke="#fff"/><text x="9" y="22" font-size="7" fill="#fff" text-anchor="middle" font-family="Liberation Sans" font-weight="700">4</text></svg></div>
  <div class="tb-ic tb-chrome"><svg width="24" height="24" viewBox="0 0 24 24"><path d="M12 12L1.600 6a12 12 0 0 1 20.800 0z" fill="#db4437"/><path d="M12 12L1.600 6A12 12 0 0 0 12 24z" fill="#0f9d58"/><path d="M12 12l10.400-6A12 12 0 0 1 12 24z" fill="#f4b400"/><circle cx="12" cy="12" r="5.500" fill="#fff"/><circle cx="12" cy="12" r="4.300" fill="#4285f4"/></svg></div>
  <div class="tb-ic tb-excel"><svg width="24" height="24" viewBox="0 0 24 24"><rect x="3" y="2" width="19" height="20" fill="#eaf3ea" stroke="#2f8a44"/><rect x="3" y="2" width="19" height="4" fill="#bcdcc0"/><path d="M14 10h8M14 14h8M14 18h8M18 6v16" stroke="#a6c9ab"/><path d="M3 6h4l2.500 4L12 6h4l-4.500 6 4.500 6h-4l-2.500-4L7 18H3l4.500-6z" fill="#1e7b34"/></svg></div>
  <div class="tray">
    <div class="position-relative"><svg width="25" height="24" viewBox="0 0 25 24"><ellipse cx="9" cy="8" rx="8" ry="4" fill="#b7d0ea"/><ellipse cx="8" cy="6" rx="5" ry="4" fill="#d5e4f3"/><path d="M3 12c1 6 7 10 13 8-4 0-8-3-8-8z" fill="#ee8a1d"/><ellipse cx="16" cy="18" rx="8" ry="4" fill="#8fb8e4"/><ellipse cx="16" cy="15" rx="5" ry="4" fill="#b7d0ea"/></svg><div class="tb-badge position-absolute">8</div></div>
    <span class="wx-temp">26°C</span><span class="wx-txt">Berawan</span>
    <svg class="tr-ic" width="12" height="7" viewBox="0 0 12 7"><path d="M.5 6.500L6 1l5.500 5.500" fill="none" stroke="#fff"/></svg>
    <div class="sp w4"></div>
    <svg class="tr-ic" width="12" height="16" viewBox="0 0 12 16"><rect x=".5" y="3.500" width="7" height="8" rx="1.500" fill="none" stroke="#fff"/><path d="M8 6l4-2v7L8 9M2 1.500h4M2 14.500h4" fill="none" stroke="#fff"/></svg>
    <svg class="tr-ic" width="16" height="11" viewBox="0 0 16 11"><rect x="4.500" y="2.500" width="10" height="7" fill="#fff" stroke="#fff"/><path d="M0 3h3M1 1v3M1 4v3h3" fill="none" stroke="#fff"/><rect x="14" y="4" width="2" height="3" fill="#fff"/></svg>
    <svg class="tr-ic" width="12" height="12" viewBox="0 0 12 12"><path d="M.5 11C1 5 6 1 11.500.5M3 11c.5-4 4-7 8.500-7.500M5.500 11c.3-2 3-4.500 6-5" fill="none" stroke="#d8d8d2"/><circle cx="9.500" cy="10" r="1.500" fill="#fff"/></svg>
    <svg width="16" height="14" viewBox="0 0 16 14"><path d="M.5 4.500h3L7.500.5v13l-4-4h-3z" fill="none" stroke="#fff"/><path d="M10 4a4 4 0 0 1 0 6M12 2a7 7 0 0 1 0 10" fill="none" stroke="#fff"/></svg>
    <div class="clock">18.23<br>03/06/2026</div>
    <div class="notif"><svg width="16" height="15" viewBox="0 0 16 15"><path d="M.5.500h15v11H9l-2 2.500-1-2.500H.5z" fill="none" stroke="#fff"/></svg></div>
  </div>
</div>

<script>
const widths = [25,42,114,79,80,54,40,136,144,61,72,98,142,117,82,61];
const letters = ['A','B','C','D','E','F','G','H','I','J','K','L','M','N','O'];
const heads = ['NISN','Nama','JK','Tahun Lulus','Jurusan','Kelas','WA','Email','Kota','Provinsi','Status Karier','Instansi','Jabatan','Verifikasi'];
const jurusan = {
    Bahasa: ['XII-C','Wirausaha','Usaha Mandiri'],
    TKJ: ['XII-D','Belum Bekerja',''],
    IPS: ['XII-B','Kuliah','Universitas Indonesia'],
    IPA: ['XII-A','Bekerja','PT Nusantara Digital'],
    RPL: ['XII-E','Lainnya','Komunitas Sosial']
};
const L = 'Laki-laki', P = 'Perempuan';
// nomor urut, nama, jk, tahun, jurusan
const alumni = [
    [17,'Hendra Wijaya',L,2023,'Bahasa'],[8,'Nadia Aulia',P,2023,'TKJ'],[7,'Andi Saputra',L,2022,'Bahasa'],
    [16,'Novi Yanti',P,2022,'IPS'],[15,'Fajar Maulana',L,2021,'IPA'],[6,'Maya Putri',P,2021,'IPS'],
    [5,'Budi Santoso',L,2020,'IPA'],[14,'Rika Amelia',P,2020,'RPL'],[13,'Agus Setiawan',L,2019,'TKJ'],
    [4,'Dewi Lestari',P,2019,'RPL'],[12,'Lina Marlina',P,2018,'Bahasa'],[3,'Rizky Pratama',L,2018,'TKJ'],
    [11,'Dimas Ramadhan',L,2017,'IPS'],[20,'Putri Rahma',P,2017,'IPA'],[2,'Siti Nurhaliza',P,2017,'Bahasa'],
    [1,'Ahmad Fauzi',L,2016,'IPS'],[10,'Fitri Handayani',P,2016,'IPA'],[19,'Yoga Firmansyah',L,2016,'RPL'],
    [18,'Citra Anggraini',P,2015,'TKJ'],[9,'Rian Hidayat',L,2015,'RPL']
];
let html = '<colgroup>' + widths.map(w => `<col width="${w}">`).join('') + '</colgroup>';
html += '<tr><td class="corner"><svg width="24" height="19" viewBox="0 0 24 19"><path d="M20 5v11H8z" fill="#b9bdc3"/></svg></td>';
html += letters.map(c => `<td class="colh${c === 'H' ? ' act' : ''}">${c}</td>`).join('') + '</tr>';
html += '<tr><td class="rowh">1</td>' + heads.map((h, i) => `<td class="data hd${i === 6 ? ' wa' : ''}">${h}</td>`).join('') + '<td></td></tr>';
alumni.forEach((a, i) => {
    const rowNo = i + 2;
    const nn = String(a[0]).padStart(2, '0');
    const j = jurusan[a[4]];
    const isSel = rowNo === 19;
    const email = `alumni${a[0]}@email.com`;
    html += `<tr><td class="rowh${isSel ? ' act' : ''}">${rowNo}</td>
        <td class="data num">${10000 + a[0]}</td><td class="data">${a[1]}</td><td class="data">${a[2]}</td>
        <td class="data num">${a[3]}</td><td class="data tg">${a[4]}</td><td class="data tg">${j[0]}</td>
        <td class="data wa">62812000000${nn}</td>
        <td class="data${isSel ? ' sel' : ''}">${email}${isSel ? '<span class="fillh"></span>' : ''}</td>
        <td class="data">Bandung</td><td class="data tg">Jawa Barat</td><td class="data">${j[1]}</td><td class="data">${j[2]}</td>
        <td class="data tg">Staff / Mahasiswa</td><td class="data">terverifikasi</td><td></td></tr>`;
});
for (let r = 22; r <= 26; r++) {
    html += `<tr><td class="rowh">${r < 26 ? r : ''}</td>` + '<td></td>'.repeat(15) + '</tr>';
}
document.getElementById('grid').innerHTML = html;
</script>
</body>
</html>
